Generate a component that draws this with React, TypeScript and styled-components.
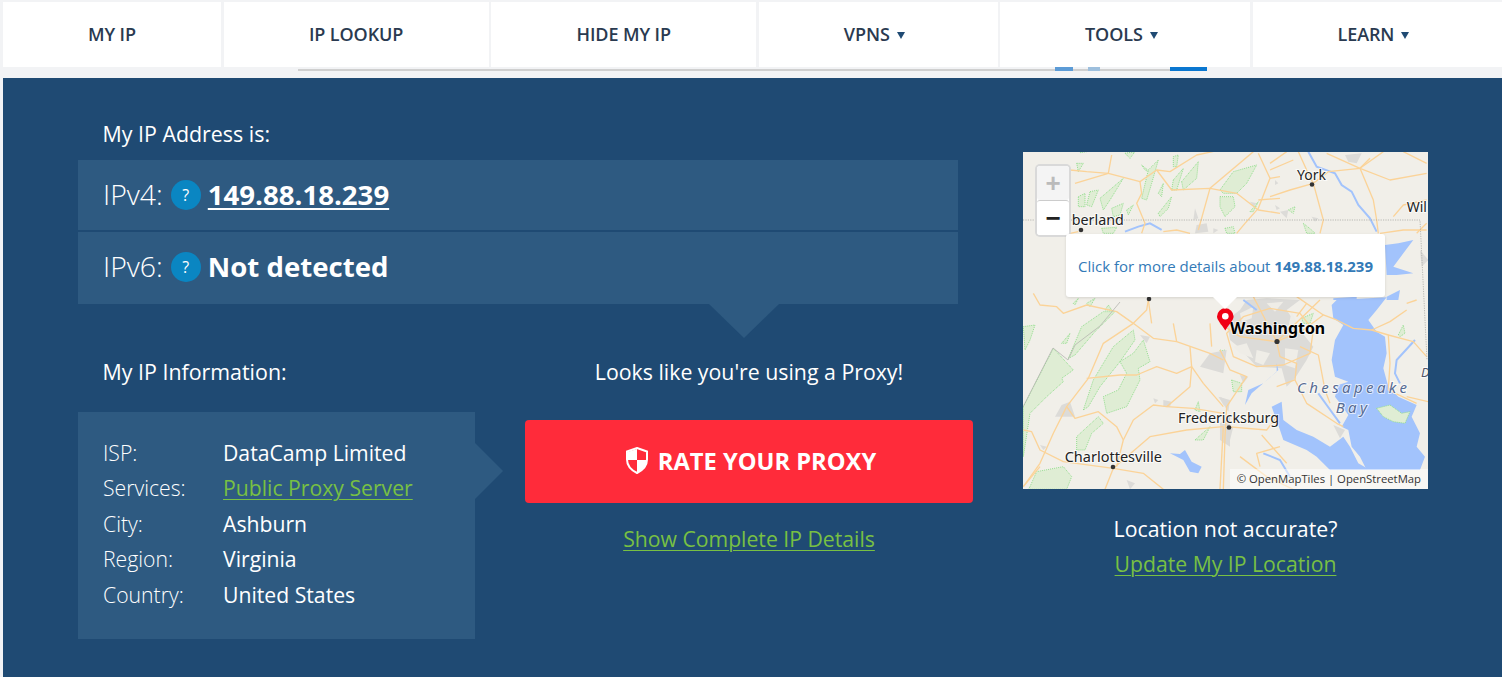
import React from 'react';
import styled, { createGlobalStyle } from 'styled-components';

const GlobalStyle = createGlobalStyle`
  html, body {
    margin: 0;
    padding: 0;
    height: 100%;
    overflow: hidden;
    background: #f2f3f5;
    font-family: 'Open Sans', sans-serif;
  }
`;

const Page = styled.div`
  display: flex;
  flex-direction: column;
  height: 677px;
  padding-left: 3px;
`;

const Nav = styled.nav`
  display: flex;
  gap: 2.6px;
  margin-top: 2px;
  height: 65px;
`;

const NavItem = styled.a<{ $width: number }>`
  display: flex;
  align-items: center;
  justify-content: center;
  gap: 7px;
  width: ${({ $width }) => $width}px;
  box-sizing: border-box;
  padding-bottom: 2px;
  flex-shrink: 0;
  background: #fff;
  color: #2a3a50;
  font-size: 18px;
  font-weight: 600;
  letter-spacing: -0.1px;
`;

const Caret = styled.span`
  width: 0;
  height: 0;
  margin: 3px 8px 0 0;
  border-left: 4px solid transparent;
  border-right: 4px solid transparent;
  border-top: 7px solid #1f4a73;
`;

const AdStrip = styled.div`
  height: 11px;
  padding-left: 295px;
`;

const AdFrame = styled.div`
  position: relative;
  width: 909px;
  height: 2px;
  margin-top: 2px;
  background: #cfcfcf;
`;

const AdMark = styled.span<{ $left: number; $width: number; $color: string }>`
  position: absolute;
  top: -2px;
  left: ${({ $left }) => $left}px;
  width: ${({ $width }) => $width}px;
  height: 4px;
  background: ${({ $color }) => $color};
`;

const Hero = styled.main`
  flex: 1;
  display: grid;
  grid-template-columns: 895px 405px;
  column-gap: 50px;
  align-items: start;
  padding: 42px 0 0 75px;
  background: #1f4a73;
  color: #fff;
`;

const LeftColumn = styled.div`
  display: flex;
  flex-direction: column;
`;

const Heading = styled.div`
  padding-left: 24.5px;
  font-size: 21.4px;
  line-height: 28px;
`;

const IpPanels = styled.div`
  position: relative;
  display: flex;
  flex-direction: column;
  gap: 2px;
  width: 880px;
  margin-top: 12px;

  &::after {
    content: '';
    position: absolute;
    left: 631px;
    top: 100%;
    border-left: 35px solid transparent;
    border-right: 35px solid transparent;
    border-top: 34px solid #2e5a81;
  }
`;

const IpPanel = styled.div<{ $height: number; $lift?: number }>`
  display: flex;
  align-items: center;
  box-sizing: border-box;
  height: ${({ $height }) => $height}px;
  padding: 0 0 ${({ $lift }) => $lift ?? 0}px 25px;
  background: #2e5a81;
`;

const IpLabel = styled.span`
  font-size: 28.4px;
  font-weight: 300;
  line-height: 36px;
  margin-top: -2px;
`;

const HelpBadge = styled.span`
  display: flex;
  align-items: center;
  justify-content: center;
  width: 30px;
  height: 30px;
  margin: 0 7px 0 8px;
  border-radius: 50%;
  background: #0a86c2;
  font-size: 16px;
`;

const IpValue = styled.a`
  font-size: 27.6px;
  font-weight: 700;
  line-height: 36px;
  margin-top: -2px;
  color: #fff;
  text-decoration: underline;
  text-decoration-thickness: 2px;
  text-underline-offset: 3px;
`;

const IpStatus = styled.span`
  font-size: 27.6px;
  font-weight: 700;
  line-height: 36px;
  margin-top: -2px;
`;

const LowerRow = styled.div`
  display: grid;
  grid-template-columns: 397px 448px;
  column-gap: 50px;
`;

const InfoColumn = styled.div`
  padding-top: 54px;
`;

const InfoBox = styled.div`
  position: relative;
  height: 227px;
  box-sizing: border-box;
  margin-top: 26px;
  padding: 22.6px 25px 0;
  background: #2e5a81;

  &::after {
    content: '';
    position: absolute;
    left: 100%;
    top: 31px;
    border-top: 28px solid transparent;
    border-bottom: 28px solid transparent;
    border-left: 28px solid #2e5a81;
  }
`;

const InfoRow = styled.div`
  display: grid;
  grid-template-columns: 120px 1fr;
  height: 35.5px;
  align-items: center;
  font-size: 21.2px;
`;

const InfoLabel = styled.span`
  font-weight: 300;
`;

const GreenLink = styled.a`
  display: inline-block;
  color: #78c043;
  font-size: 21.2px;
  line-height: 29px;
  text-decoration: underline;
  text-decoration-thickness: 1px;
  text-underline-offset: 3px;
`;

const ActionColumn = styled.div`
  display: flex;
  flex-direction: column;
  align-items: center;
  padding-top: 54px;
`;

const ProxyNote = styled.div`
  font-size: 21.3px;
  line-height: 28px;
`;

const RateButton = styled.button`
  display: flex;
  align-items: center;
  justify-content: center;
  gap: 10px;
  width: 100%;
  height: 83px;
  margin-top: 34px;
  padding: 0 0 2px 4px;
  border: none;
  border-radius: 4px;
  background: #ff2b3a;
  color: #fff;
  font-family: inherit;
  font-size: 23.7px;
  font-weight: 700;
`;

const DetailsRow = styled.div`
  margin-top: 20.5px;
`;

const RightColumn = styled.div`
  display: flex;
  flex-direction: column;
  align-items: center;
  padding-top: 32px;
`;

const MapCard = styled.div`
  position: relative;
  width: 405px;
  height: 337px;
  overflow: hidden;
  background: #f1efe9;
`;

const MapDrawing = styled.svg`
  display: block;
  width: 405px;
  height: 337px;
`;

const ZoomControl = styled.div`
  position: absolute;
  left: 12px;
  top: 12px;
  width: 36px;
  height: 73px;
  box-sizing: border-box;
  border: 2px solid rgba(0, 0, 0, 0.15);
  border-radius: 5px;
  background: #fff;
  display: flex;
  flex-direction: column;
`;

const ZoomButton = styled.span<{ $disabled?: boolean }>`
  flex: 1;
  display: flex;
  align-items: center;
  justify-content: center;
  background: ${({ $disabled }) => ($disabled ? '#f4f4f4' : '#fff')};
  color: ${({ $disabled }) => ($disabled ? '#bbb' : '#222')};
  font-family: 'Liberation Sans', sans-serif;
  font-size: 26px;
  font-weight: 700;
  line-height: 1;
  border-radius: 3px;

  & + & {
    border-top: 1px solid #ccc;
  }
`;

const Popup = styled.div`
  position: absolute;
  left: 43px;
  top: 82px;
  display: flex;
  align-items: center;
  justify-content: center;
  width: 319px;
  height: 63px;
  border-radius: 3px;
  background: #fff;
  box-shadow: 0 1px 3px rgba(0, 0, 0, 0.12);
  color: #337ab7;
  font-size: 15px;
  white-space: pre;

  &::after {
    content: '';
    position: absolute;
    left: 147px;
    top: 100%;
    border-left: 12px solid transparent;
    border-right: 12px solid transparent;
    border-top: 12px solid #fff;
  }
`;

const Attribution = styled.div`
  position: absolute;
  right: 0;
  bottom: 0;
  height: 20px;
  padding: 0 7px;
  background: rgba(255, 255, 255, 0.5);
  color: #333;
  font-size: 11.3px;
  line-height: 20px;
`;

const LocationNote = styled.div`
  margin-top: 22px;
  font-size: 21.3px;
  line-height: 35px;
`;

const LocationLink = styled(GreenLink)`
  margin-top: 3px;
`;

const MapLabel = styled.text<{ $fill?: string }>`
  font-family: 'Noto Sans', 'Open Sans', sans-serif;
  fill: ${({ $fill }) => $fill ?? '#222'};
  stroke: rgba(255, 255, 255, 0.7);
  stroke-width: 2px;
  paint-order: stroke;
`;

// traced tile pieces, each in the pixel grid of its own 3x crop
interface TileLayer {
  origin: [number, number];
  forests?: string[];
  urban?: string[];
  holes?: string[];
  water?: string[];
  rivers?: string[];
  roads?: string[];
}

const tiles: TileLayer[] = [
  {
    origin: [1020, 290],
    forests: [
      'M10,110 L45,105 L30,150 L15,180 Z',
      'M10,350 L100,175 L160,240 L125,265 L130,275 L80,320 L30,370 L10,500 Z',
      'M145,205 L185,110 L250,65 L285,65 L225,125 L165,195 Z',
      'M190,360 L220,270 L280,170 L340,120 L345,150 L300,215 L240,290 L205,350 Z',
      'M300,215 L340,190 L370,150 L390,215 L355,235 L360,270 L320,350 L260,370 L250,320 L295,300 L320,250 Z',
      'M170,480 L170,440 L235,380 L250,400 L215,430 L195,480 Z',
      'M30,590 L50,545 L130,530 L155,560 L140,598 L25,598 Z',
      'M125,160 L150,130 L140,160 Z',
      'M525,360 L535,335 L540,365 Z',
      'M525,450 L570,410 L550,450 Z',
      'M590,190 L615,180 L605,195 Z',
      'M200,40 L225,25 L210,50 Z',
      'M160,40 L175,25 L165,45 Z',
      'M255,60 L265,45 L275,60 Z',
    ],
    urban: [
      'M125,345 L150,335 L165,380 L105,380 Z',
      'M430,330 L455,335 L450,350 L430,350 Z',
      'M360,135 L390,140 L380,160 Z',
      'M570,190 L620,180 L610,250 L540,230 Z',
      'M600,400 L630,380 L630,470 L600,450 Z',
      'M320,570 L345,580 L330,598 Z',
      'M60,465 L80,470 L70,480 Z',
      'M400,325 L415,330 L405,340 Z',
      'M595,320 L630,330 L625,365 Z',
    ],
    water: [
      'M450,490 L480,492 L495,480 L515,515 L545,530 L535,550 L510,545 L490,510 Z',
    ],
    roads: [
      'M40,10 L60,45 L110,50 L130,70 L200,45 L290,65 L340,100 L380,60 L385,30',
      'M340,100 L400,145 L470,155 L570,190 L610,210',
      'M340,100 L250,160 L205,265 L140,350 L100,430 L60,520 L10,590',
      'M200,265 L300,255 L350,255 L410,230 L470,250 L515,230 L510,290 L440,350 L400,345 L340,390 L310,450 L290,530',
      'M140,350 L165,385 L235,365 L290,410 L310,450',
      'M10,420 L35,425 L60,480 L130,515 L280,535 L370,550 L430,598',
      'M280,535 L390,440 L500,420 L610,410',
      'M280,535 L255,598',
      'M515,230 L550,280 L610,350',
      'M440,350 L520,355 L610,370',
      'M385,30 L395,100',
      'M460,100 L470,155',
      'M510,170 L515,230',
      'M10,590 L60,530',
      'M610,410 L600,598',
      'M570,100 L575,170',
    ],
  },
  {
    origin: [1220, 290],
    forests: [
      'M35,270 L65,280 L65,305 L40,305 Z',
      'M535,135 L550,105 L555,130 L540,140 Z',
      'M245,85 L280,70 L270,100 L250,100 Z',
      'M0,180 L15,185 L5,195 Z',
    ],
    urban: [
      'M20,90 L60,60 L80,30 L140,25 L240,30 L200,60 L240,120 L280,170 L260,210 L225,265 L200,290 L185,235 L110,230 L55,170 L30,150 Z',
      'M60,255 L85,260 L70,280 Z',
      'M340,405 L375,420 L360,445 Z',
      'M0,320 L20,330 L10,345 Z',
      'M5,410 L40,410 L30,450 L10,460 Z',
    ],
    holes: [
      'M40,170 L80,160 L100,205 L60,190 Z',
      'M110,180 L150,190 L130,225 L105,215 Z',
      'M195,175 L235,180 L225,235 L195,225 Z',
      'M215,65 L240,120 L205,110 Z',
      'M60,70 L100,50 L95,85 L65,95 Z',
      'M140,40 L190,35 L165,65 Z',
    ],
    water: [
      'M335,45 L350,30 L500,22 L470,60 L445,90 L470,125 L495,140 L500,190 L490,235 L505,290 L535,320 L590,345 L575,380 L600,430 L590,470 L615,500 L600,540 L440,540 L420,500 L395,470 L385,420 L365,410 L385,375 L360,340 L345,320 L355,285 L385,275 L345,260 L335,210 L345,150 L370,105 L340,85 Z',
      'M155,350 L185,335 L190,390 L230,420 L280,440 L330,470 L370,440 L390,470 L415,520 L450,540 L330,540 L290,500 L260,480 L190,450 L180,420 Z',
      'M170,220 L175,240 L130,280 L95,310 L75,345 L85,300 L130,280 L170,245 Z',
    ],
    rivers: [
      'M295,310 L320,345 L360,400',
      'M585,150 L530,210 L525,250 L540,280',
      'M130,490 L180,510 L210,560',
      'M70,30 L110,60',
    ],
    roads: [
      'M170,155 L250,120 L310,75 L350,90 L400,115 L455,120 L510,95 L560,60',
      'M455,120 L505,135 L510,220 L505,300 L590,340',
      'M505,135 L580,155 L620,200',
      'M225,270 L260,340 L350,400 L370,410',
      'M0,180 L30,240 L80,260 L20,350 L15,440 L10,598',
      'M20,410 L140,420 L170,380',
      'M170,155 L180,200 L230,220 L225,270 L170,290',
      'M0,100 L60,140 L170,155',
      'M100,20 L170,155 L300,30',
      'M230,80 L260,40',
      'M230,20 L310,75',
      'M70,80 L20,130 L40,200 L110,230 L190,225 L270,190 L280,120 L240,70 L150,55 Z',
      'M60,500 L140,560 L220,598',
      'M125,435 L200,520',
      'M240,170 L295,195 L315,300 L330,340',
      'M560,320 L625,335',
      'M180,470 L110,490 L120,530',
      'M560,40 L590,30',
    ],
  },
  {
    origin: [1070, 150],
    forests: [
      'M20,40 L40,40 L25,65 Z',
      'M25,140 L45,130 L45,170 L25,170 Z',
      'M60,125 L85,120 L65,170 L50,165 Z',
      'M90,145 L160,85 L120,150 L100,180 Z',
      'M125,175 L160,160 L150,195 L130,200 Z',
      'M170,180 L190,165 L175,195 Z',
      'M215,45 L245,70 L225,60 Z',
      'M235,60 L265,30 L245,100 L230,150 L215,145 Z',
      'M265,130 L280,100 L275,140 Z',
      'M310,20 L325,15 L320,50 L310,50 Z',
      'M310,90 L340,55 L320,120 L305,120 Z',
      'M335,95 L385,35 L380,85 L340,120 Z',
      'M265,190 L305,140 L295,175 L270,200 Z',
      'M165,10 L195,5 L180,25 Z',
      'M450,120 L490,65 L560,45 L530,100 L500,130 L460,130 Z',
      'M450,140 L490,140 L495,170 L465,200 L450,170 Z',
      'M540,185 L565,155 L550,185 Z',
      'M25,0 L50,5 L30,8 Z',
      'M95,235 L140,232 L130,250 L100,250 Z',
      'M465,235 L490,230 L495,250 L470,250 Z',
    ],
    urban: [
      'M375,175 L385,205 L370,210 Z',
      'M380,225 L410,220 L415,245 L375,250 Z',
      'M540,155 L560,160 L550,170 Z',
      'M430,235 L445,240 L430,250 Z',
    ],
    rivers: ['M165,245 L205,230 L240,220 L275,240'],
    roads: [
      'M0,60 L50,65 L115,70 L125,15',
      'M115,70 L210,95 L260,60 L305,120 L420,115 L500,130 L565,180 L630,190',
      'M210,95 L215,130 L200,160 L225,220 L215,250',
      'M15,100 L115,70',
      'M420,115 L385,240',
      'M420,115 L550,5',
      'M565,10 L600,85 L565,175 L525,220 L500,250',
      'M630,80 L600,85',
      'M565,150 L630,145',
      'M280,245 L320,240 L360,250',
      'M450,0 L380,15 L300,65 L260,60',
      'M0,250 L25,245',
    ],
  },
  {
    origin: [1270, 150],
    forests: [
      'M55,180 L75,170 L70,190 Z',
      'M100,220 L125,240 L135,250 L110,250 Z',
    ],
    urban: [
      'M225,15 L275,10 L260,40 L235,35 Z',
      'M30,185 L55,180 L50,205 Z',
      'M15,90 L25,100 L15,105 Z',
      'M15,165 L30,175 L20,180 Z',
      'M125,200 L145,205 L135,215 Z',
      'M450,300 L475,330 L455,350 Z',
    ],
    water: [
      'M345,285 L385,280 L430,270 L400,310 L370,350 L430,370 L380,375 L350,375 Z',
      'M350,440 L390,420 L385,450 L350,450 Z',
      'M190,445 L260,440 L260,450 L190,450 Z',
    ],
    rivers: ['M115,5 L140,50 L195,70 L215,105 L245,125 L265,165 L300,205 L320,245'],
    roads: [
      'M85,5 L110,60 L130,100 L160,210 L150,250',
      'M0,140 L60,120 L130,100 L175,65 L270,55 L300,25',
      'M270,55 L360,90 L470,70',
      'M270,55 L310,150 L320,210 L325,250',
      'M170,10 L270,55',
      'M270,55 L340,5',
      'M370,200 L400,165 L470,150',
      'M400,5 L470,40',
      'M0,40 L50,5',
      'M330,250 L400,240 L470,240',
      'M440,250 L470,220',
      'M0,60 L70,30',
    ],
  },
];

const cities: [number, number, number][] = [
  [1312, 184.5, 2.3],
  [1081, 230, 2.3],
  [1149, 299, 2.3],
  [1277, 341.5, 2.6],
  [1229, 427.5, 2.3],
  [1113, 467, 2.3],
];

type LayerKey = 'forests' | 'urban' | 'holes' | 'water' | 'rivers' | 'roads';

const forestPaint = { fill: '#dfedd4', stroke: '#93dd8e', strokeWidth: 3, strokeDasharray: '3 3' };

const renderLayer = (key: LayerKey, paint: React.SVGProps<SVGPathElement>) =>
  tiles.map((tile) => (
    <g key={`${key}-${tile.origin[0]}`} transform={`translate(${tile.origin[0]} ${tile.origin[1]}) scale(0.3333)`}>
      {(tile[key] ?? []).map((d) => (
        <path key={d} d={d} {...paint} />
      ))}
    </g>
  ));

const MapArt: React.FC = () => (
  <MapDrawing viewBox="1023 152 405 337">
    {renderLayer('forests', forestPaint)}
    {renderLayer('urban', { fill: '#dcdbd8' })}
    {renderLayer('holes', { fill: '#efede7' })}
    {renderLayer('water', { fill: '#a2c3fc' })}
    {renderLayer('rivers', { fill: 'none', stroke: '#a2c3fc', strokeWidth: 6 })}
    <g transform="translate(1220 290) scale(0.3333)">
      <path d="M470,355 L510,345 L545,370 L570,365 L555,400 L520,395 L490,380 Z" {...forestPaint} />
    </g>
    {renderLayer('roads', {
      fill: 'none',
      stroke: '#fbd398',
      strokeWidth: 4,
      strokeLinejoin: 'round',
    })}
    <path
      d="M1023,220 L1420,220 L1427,360"
      fill="none"
      stroke="#aaa9a5"
      strokeWidth="0.8"
      strokeDasharray="1.2 1.2"
    />
    <path
      d="M1023,407 L1053,348 L1068,360 L1075,345 L1100,326 L1120,302"
      fill="none"
      stroke="#b5b5b0"
      strokeWidth="0.8"
    />

    {cities.map(([cx, cy, r]) => (
      <circle key={cx} cx={cx} cy={cy} r={r} fill="#333" />
    ))}

    <MapLabel x="1297" y="179.7" fontSize="14">York</MapLabel>
    <MapLabel x="1406.7" y="211.7" fontSize="14">Wil</MapLabel>
    <MapLabel x="1071.7" y="225.3" fontSize="14.3">berland</MapLabel>
    <MapLabel x="1178" y="422.7" fontSize="14.3">Fredericksburg</MapLabel>
    <MapLabel x="1064.7" y="462.3" fontSize="14.5">Charlottesville</MapLabel>
    <MapLabel x="1421" y="376.7" fontSize="13" fontStyle="italic" $fill="#556">D</MapLabel>
    <MapLabel x="1230" y="334.3" fontSize="15.9" fontWeight="700" $fill="#000">Washington</MapLabel>
    <MapLabel x="1297" y="392.7" fontSize="15" fontStyle="italic" letterSpacing="3.4" $fill="#566a92">Chesapeake</MapLabel>
    <MapLabel x="1335.7" y="412.7" fontSize="15" fontStyle="italic" letterSpacing="3.4" $fill="#566a92">Bay</MapLabel>

    <path
      d="M1225.3,330.5 C1221,323.5 1217,320 1217,316.5 A8.3,8.3 0 0 1 1233.6,316.5 C1233.6,320 1229.6,323.5 1225.3,330.5 Z"
      fill="#f00014"
    />
    <circle cx="1225.3" cy="316.3" r="3.3" fill="#fff" />
  </MapDrawing>
);

const ShieldIcon: React.FC = () => (
  <svg width="22" height="27" viewBox="0 0 22 27">
    <path
      d="M11,1 L21,4.5 L21,12.5 C21,19.5 16,23.5 11,26 C6,23.5 1,19.5 1,12.5 L1,4.5 Z"
      fill="none"
      stroke="#fff"
      strokeWidth="2"
    />
    <path d="M11,2 L11,13 L1.5,13 L1.5,5 Z" fill="#fff" />
    <path d="M11,13 L20.5,13 C20.5,19 16,23 11,25.5 Z" fill="#fff" />
  </svg>
);

const infoRows: { label: string; value: string; link?: boolean }[] = [
  { label: 'ISP:', value: 'DataCamp Limited' },
  { label: 'Services:', value: 'Public Proxy Server', link: true },
  { label: 'City:', value: 'Ashburn' },
  { label: 'Region:', value: 'Virginia' },
  { label: 'Country:', value: 'United States' },
];

const navItems: { label: string; width: number; caret?: boolean }[] = [
  { label: 'MY IP', width: 218 },
  { label: 'IP LOOKUP', width: 265 },
  { label: 'HIDE MY IP', width: 265 },
  { label: 'VPNS', width: 239, caret: true },
  { label: 'TOOLS', width: 250, caret: true },
  { label: 'LEARN', width: 249, caret: true },
];

const App: React.FC = () => (
  <>
    <GlobalStyle />
    <Page>
      <Nav>
        {navItems.map((item) => (
          <NavItem key={item.label} $width={item.width}>
            {item.label}
            {item.caret && <Caret />}
          </NavItem>
        ))}
      </Nav>
      <AdStrip>
        <AdFrame>
          <AdMark $left={757} $width={18} $color="#5c9bd6" />
          <AdMark $left={790} $width={12} $color="#9dbfdd" />
          <AdMark $left={872} $width={37} $color="#0a77d0" />
        </AdFrame>
      </AdStrip>
      <Hero>
        <LeftColumn>
          <Heading>My IP Address is:</Heading>
          <IpPanels>
            <IpPanel $height={70}>
              <IpLabel>IPv4:</IpLabel>
              <HelpBadge>?</HelpBadge>
              <IpValue>149.88.18.239</IpValue>
            </IpPanel>
            <IpPanel $height={72} $lift={2}>
              <IpLabel>IPv6:</IpLabel>
              <HelpBadge>?</HelpBadge>
              <IpStatus>Not detected</IpStatus>
            </IpPanel>
          </IpPanels>
          <LowerRow>
            <InfoColumn>
              <Heading>My IP Information:</Heading>
              <InfoBox>
                {infoRows.map((row) => (
                  <InfoRow key={row.label}>
                    <InfoLabel>{row.label}</InfoLabel>
                    {row.link ? <GreenLink>{row.value}</GreenLink> : <span>{row.value}</span>}
                  </InfoRow>
                ))}
              </InfoBox>
            </InfoColumn>
            <ActionColumn>
              <ProxyNote>Looks like you're using a Proxy!</ProxyNote>
              <RateButton>
                <ShieldIcon />
                RATE YOUR PROXY
              </RateButton>
              <DetailsRow>
                <GreenLink>Show Complete IP Details</GreenLink>
              </DetailsRow>
            </ActionColumn>
          </LowerRow>
        </LeftColumn>
        <RightColumn>
          <MapCard>
            <MapArt />
            <ZoomControl>
              <ZoomButton $disabled>+</ZoomButton>
              <ZoomButton>&minus;</ZoomButton>
            </ZoomControl>
            <Popup>
              Click for more details about <b>149.88.18.239</b>
            </Popup>
            <Attribution>© OpenMapTiles | OpenStreetMap</Attribution>
          </MapCard>
          <LocationNote>Location not accurate?</LocationNote>
          <LocationLink>Update My IP Location</LocationLink>
        </RightColumn>
      </Hero>
    </Page>
  </>
);

export default App;
